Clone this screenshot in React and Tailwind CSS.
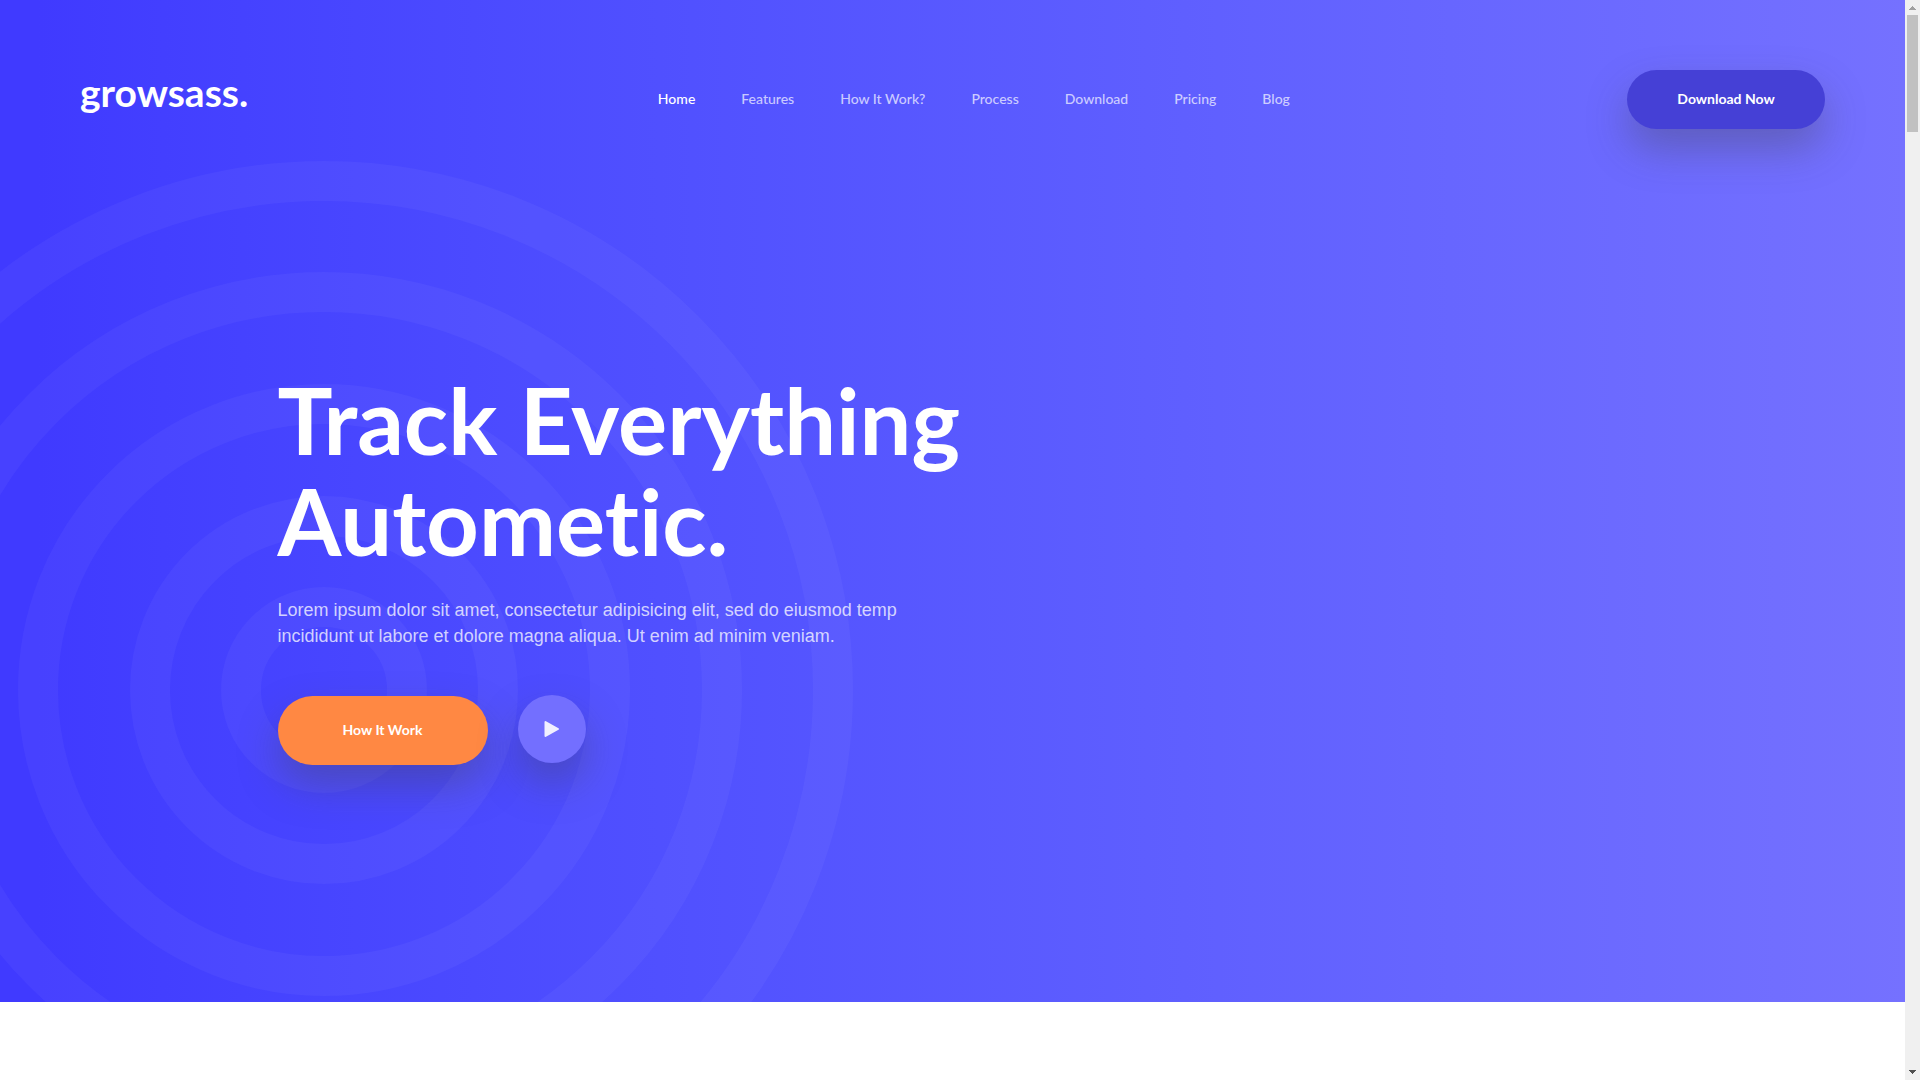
const navItems = ['Home', 'Features', 'How It Work?', 'Process', 'Download', 'Pricing', 'Blog']

// radius of each ring's centre line, the stroke is 40 wide
const rings = [83, 174, 286, 398, 509]

function Rings() {
  return (
    <svg
      className="pointer-events-none absolute top-[161px] -left-[205px] h-[1058px] w-[1058px]"
      viewBox="0 0 1058 1058"
      fill="none"
      aria-hidden="true"
    >
      {rings.map(r => (
        <circle key={r} cx="529" cy="529" r={r} stroke="#fff" strokeOpacity="0.04" strokeWidth="40" />
      ))}
    </svg>
  )
}

function Header() {
  return (
    <header className="relative flex items-center px-20 pt-[70px]">
      <div className="w-[33%]">
        <a href="#home" className="block pb-4 text-[39px] leading-10 font-bold">growsass.</a>
      </div>
      <nav className="flex gap-[46px] pb-0.5 pl-0.5 text-sm font-medium">
        {navItems.map((item, i) => (
          <a key={item} href="#home" className={i === 0 ? 'text-white' : 'text-white/70'}>
            {item}
          </a>
        ))}
      </nav>
      <button className="ml-auto h-[59px] w-[198px] rounded-full bg-[#4540d6] pb-0.5 text-sm font-bold shadow-[0_20px_40px_rgba(65,65,65,0.35)]">
        Download Now
      </button>
    </header>
  )
}

function Hero() {
  return (
    <section className="relative overflow-hidden bg-linear-to-r from-[#403aff] from-2% to-[#7571ff] pb-[237px] text-white">
      <Rings />
      <Header />
      <div className="relative mx-auto max-w-[1350px] pt-60">
        <h1 className="text-[92px] leading-[101px] font-bold [font-variant-ligatures:none]">
          Track Everything
          <br />
          Autometic.
        </h1>
        <p className="mt-[26px] max-w-[640px] font-['Liberation_Sans',Arial,sans-serif] text-lg leading-[26px] text-white/75">
          Lorem ipsum dolor sit amet, consectetur adipisicing elit, sed do eiusmod temp incididunt ut labore et dolore magna aliqua. Ut enim ad minim veniam.
        </p>
        <div className="mt-[46px] flex items-start gap-[30px]">
          <button className="mt-px h-[69px] w-[210px] rounded-full bg-[#ff8843] pb-0.5 text-sm font-bold shadow-[0_20px_40px_rgba(65,65,65,0.35)]">
            How It Work
          </button>
          <button
            aria-label="Play video"
            className="flex size-[68px] items-center justify-center rounded-full bg-[#736fff] shadow-[0_20px_40px_rgba(65,65,65,0.35)]"
          >
            <svg className="h-[18px] w-[15px]" viewBox="0 0 15 18" fill="#f1f0ff" stroke="#f1f0ff" strokeWidth="2" strokeLinejoin="round">
              <path d="M1.5 2v14L14 9z" />
            </svg>
          </button>
        </div>
      </div>
    </section>
  )
}

function Scrollbar() {
  return (
    <div className="sticky top-0 flex h-screen w-[15px] shrink-0 flex-col items-center bg-[#f0f0f0]" aria-hidden="true">
      <svg className="h-[15px] w-[15px]" viewBox="0 0 15 15" fill="#a0a0a0">
        <path d="M7 6h1v1h1v1h1v1h1v1H4V9h1V8h1V7h1z" />
      </svg>
      <div className="h-[117px] w-[11px] bg-[#c1c1c1]" />
      <svg className="mt-auto h-[15px] w-[15px]" viewBox="0 0 15 15" fill="#505050">
        <path d="M4 5h7v1h-1v1H9v1H8v1H7V8H6V7H5V6H4z" />
      </svg>
    </div>
  )
}

export default function App() {
  return (
    <div className="flex bg-white font-['Lato',sans-serif]">
      <main className="min-w-0 flex-1">
        <Hero />
      </main>
      <Scrollbar />
    </div>
  )
}
